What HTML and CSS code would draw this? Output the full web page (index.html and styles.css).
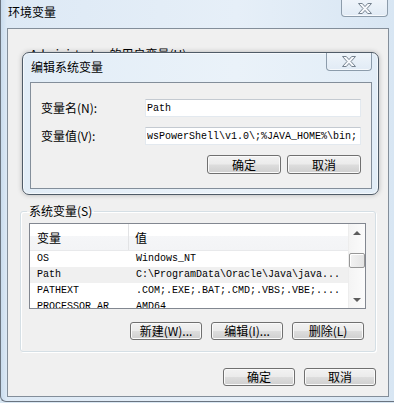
FILE: index.html
```html
<!DOCTYPE html>
<html lang="zh-CN">
<head>
	<meta charset="UTF-8">
	<meta name="viewport" content="width=device-width, initial-scale=1.0">
	<title>环境变量</title>
	<link rel="stylesheet" href="styles.css">
</head>
<body>
	<div class="window">
		<div class="titlebar">
			<span class="title">环境变量</span>
			<span class="close outer-close">
				<svg width="14" height="11" viewBox="0 0 14 11"><polygon points="0.5,0.5 4.3,0.5 7,3.6 9.7,0.5 13.5,0.5 9,5.5 13.5,10.5 9.7,10.5 7,7.4 4.3,10.5 0.5,10.5 5,5.5"/></svg>
			</span>
		</div>

		<div class="client">
			<div class="user-vars">
				<div class="group-label">Administrator 的用户变量(U)</div>
			</div>

			<fieldset class="group">
				<legend>系统变量(S)</legend>
				<div class="listview">
					<div class="lv-main">
						<div class="lv-head">
							<span class="col1">变量</span>
							<span class="col2">值</span>
						</div>
						<div class="lv-row">
							<span class="col1">OS</span>
							<span class="col2">Windows_NT</span>
						</div>
						<div class="lv-row selected">
							<span class="col1">Path</span>
							<span class="col2">C:\ProgramData\Oracle\Java\java...</span>
						</div>
						<div class="lv-row">
							<span class="col1">PATHEXT</span>
							<span class="col2">.COM;.EXE;.BAT;.CMD;.VBS;.VBE;....</span>
						</div>
						<div class="lv-row">
							<span class="col1">PROCESSOR_AR</span>
							<span class="col2">AMD64</span>
						</div>
					</div>
					<div class="scrollbar">
						<span class="sb-btn"><span class="arrow-up"></span></span>
						<span class="sb-track">
							<span class="sb-thumb"></span>
						</span>
						<span class="sb-btn"><span class="arrow-down"></span></span>
					</div>
				</div>
				<div class="btn-row">
					<button class="btn">新建(W)...</button>
					<button class="btn">编辑(I)...</button>
					<button class="btn">删除(L)</button>
				</div>
			</fieldset>

			<div class="btn-row main-btns">
				<button class="btn">确定</button>
				<button class="btn">取消</button>
			</div>
		</div>

		<!-- 编辑系统变量 对话框 -->
		<div class="dialog">
			<div class="dialog-titlebar">
				<span class="title">编辑系统变量</span>
				<span class="close">
					<svg width="14" height="11" viewBox="0 0 14 11"><polygon points="0.5,0.5 4.3,0.5 7,3.6 9.7,0.5 13.5,0.5 9,5.5 13.5,10.5 9.7,10.5 7,7.4 4.3,10.5 0.5,10.5 5,5.5"/></svg>
				</span>
			</div>
			<div class="dialog-client">
				<div class="form-row">
					<label class="form-label">变量名(N):</label>
					<input class="textbox" type="text" value="Path" readonly>
				</div>
				<div class="form-row">
					<label class="form-label">变量值(V):</label>
					<input class="textbox" type="text" value="wsPowerShell\v1.0\;%JAVA_HOME%\bin;" readonly>
				</div>
				<div class="btn-row dialog-btns">
					<button class="btn">确定</button>
					<button class="btn">取消</button>
				</div>
			</div>
		</div>
	</div>
</body>
</html>
```

FILE: styles.css
```css
* {
	box-sizing: border-box;
	margin: 0px;
	padding: 0px;
}

body {
	width: 394px;
	height: 403px;
	overflow: hidden;
	font-family: "Noto Sans CJK SC", "Liberation Sans", sans-serif;
	font-size: 12px;
	color: #000;
	background: #d9e7f3;
}

.window {
	position: relative;
	width: 394px;
	height: 402px;
	border-left: 1px solid #6a7480;
	border-bottom: 1px solid #6a7480;
	border-bottom-left-radius: 6px;
	background: linear-gradient(90deg, #c9dcee 0px, #dde9f5 6px, #e6eff8 60%, #d8e6f3 100%);
}

.titlebar {
	height: 28px;
	display: flex;
	align-items: flex-start;
	justify-content: space-between;
}

.title {
	font-size: 12px;
	line-height: 14px;
	padding: 5px 0px 0px 7px;
}

.close {
	display: flex;
	align-items: center;
	justify-content: center;
	width: 46px;
	height: 18px;
	border: 1px solid #8c9cab;
	border-top: none;
	border-radius: 0px 0px 4px 4px;
	background: linear-gradient(#eef4fa, #e1ebf5);
	box-shadow: inset 0px -1px 0px rgba(255, 255, 255, 0.7);
}

.close polygon {
	fill: #f7f9fc;
	stroke: #75828f;
	stroke-width: 1;
}

.outer-close {
	width: 47px;
	height: 17px;
	margin-right: 6px;
}

.client {
	width: 382px;
	height: 369px;
	margin-left: 6px;
	border: 1px solid #838e9a;
	background: #f0f0f0;
	display: flex;
	flex-direction: column;
}

.user-vars {
	height: 175px;
	padding: 18px 0px 0px 22px;
}

.group-label {
	line-height: 14px;
}

.group {
	margin: 0px 12px;
	padding: 0px 9px 11px 8px;
	border: 1px solid #d5dfe5;
	border-radius: 3px;
	box-shadow: inset 1px 1px 0px #fff, 1px 1px 0px #fff;
}

.group legend {
	font-size: 12px;
	line-height: 14px;
	padding: 0px 2px;
	margin-left: -2px;
}

.listview {
	display: flex;
	height: 86px;
	margin-top: 5px;
	border: 1px solid #828790;
	background: #fff;
	overflow: hidden;
}

.lv-main {
	flex: 1;
}

.lv-head {
	display: flex;
	height: 27px;
	align-items: center;
	background: linear-gradient(#fff 0px, #fff 12px, #f5f6f8 12px, #f3f4f6 100%);
	border-bottom: 1px solid #e8e9eb;
}

.lv-head .col1 {
	border-right: 1px solid #e2e3e5;
	height: 100%;
	display: flex;
	align-items: center;
}

.col1 {
	width: 99px;
	padding-left: 7px;
	flex-shrink: 0;
}

.col2 {
	padding-left: 6px;
	white-space: nowrap;
}

.lv-row {
	display: flex;
	height: 16px;
	line-height: 16px;
	font-family: "Liberation Mono", "DejaVu Sans Mono", monospace;
	font-size: 10px;
}

.lv-row .col2 {
	padding-left: 7px;
}

.lv-row.selected {
	background: #f0f0f0;
}

.scrollbar {
	width: 17px;
	display: flex;
	flex-direction: column;
	background: linear-gradient(90deg, #e6e6e6 0px, #f4f4f4 1px, #fbfbfb 100%);
}

.sb-btn {
	height: 17px;
	display: flex;
	align-items: center;
	justify-content: center;
}

.arrow-up, .arrow-down {
	width: 0px;
	height: 0px;
	border-left: 4px solid transparent;
	border-right: 4px solid transparent;
}

.arrow-up {
	border-bottom: 4px solid #5c5c5c;
}

.arrow-down {
	border-top: 4px solid #5c5c5c;
}

.sb-track {
	flex: 1;
	padding-top: 12px;
}

.sb-thumb {
	display: block;
	width: 16px;
	height: 15px;
	margin-left: 1px;
	border: 1px solid #979797;
	border-radius: 2px;
	background: linear-gradient(90deg, #f2f2f2, #e4e4e4);
	box-shadow: inset 1px 1px 0px #fff;
}

.btn-row {
	display: flex;
	justify-content: flex-end;
	gap: 9px;
	margin-top: 13px;
	padding-right: 2px;
}

.btn {
	width: 72px;
	height: 18px;
	font-family: "Noto Sans CJK SC", "Liberation Sans", sans-serif;
	font-size: 12px;
	line-height: 14px;
	color: #000;
	border: 1px solid #707070;
	border-radius: 3px;
	background: linear-gradient(#f2f2f2 0%, #ebebeb 48%, #dddddd 52%, #cfcfcf 100%);
	box-shadow: inset 0px 0px 0px 1px #fafafa;
}

.main-btns {
	margin-top: 16px;
	padding-right: 12px;
}

.dialog {
	position: absolute;
	left: 21px;
	top: 52px;
	width: 357px;
	height: 143px;
	display: flex;
	flex-direction: column;
	padding: 0px 6px 5px 7px;
	border: 1px solid #4f5b67;
	border-radius: 7px;
	background: linear-gradient(90deg, #e2edf7, #eaf2f9 60%, #e2edf7);
	box-shadow: inset 0px 0px 0px 1px rgba(255, 255, 255, 0.6), 0px 0px 5px rgba(0, 0, 0, 0.25);
}

.dialog-titlebar {
	height: 29px;
	display: flex;
	justify-content: space-between;
	align-items: flex-start;
}

.dialog-titlebar .title {
	padding: 7px 0px 0px 1px;
}

.dialog-client {
	flex: 1;
	border: 1px solid #838e9a;
	background: #f0f0f0;
	padding: 16px 10px 0px 10px;
}

.form-row {
	display: flex;
	align-items: center;
	height: 18px;
	margin-bottom: 10px;
}

.form-label {
	width: 104px;
	line-height: 14px;
}

.textbox {
	width: 216px;
	height: 18px;
	padding: 0px 1px;
	font-family: "Liberation Mono", "DejaVu Sans Mono", monospace;
	font-size: 10px;
	color: #000;
	border: 1px solid #e3e9ef;
	border-top-color: #c4cad1;
	background: #fff;
	outline: none;
}

.dialog-btns {
	margin-top: 3px;
	gap: 6px;
	padding-right: 0px;
}

.dialog-btns .btn {
	width: 74px;
	height: 19px;
}
```
